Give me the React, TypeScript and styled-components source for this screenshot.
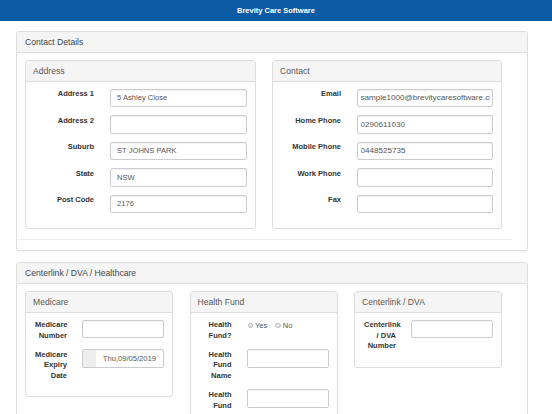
import React from 'react';
import styled, { createGlobalStyle } from 'styled-components';

const Global = createGlobalStyle`
  html, body { margin: 0; padding: 0; overflow: hidden; background: #fff; }
  body { font-family: "Liberation Sans", Arial, Helvetica, sans-serif; color: #333; }
  *, *::before, *::after { box-sizing: border-box; }
`;

const TopBar = styled.header`
  height: 21px;
  background: #0c5aa4;
  color: #fff;
  font-weight: bold;
  font-size: 7.5px;
  display: flex;
  align-items: center;
  justify-content: center;
`;

const Main = styled.main`
  padding: 10px 24px 0 16px;
  display: flex;
  flex-direction: column;
  gap: 11px;
`;

const Panel = styled.section`
  border: 1px solid #dddddd;
  border-radius: 3px;
  background: #fff;
  box-shadow: 0 1px 1px rgba(0, 0, 0, 0.04);
`;

const PanelHeading = styled.div`
  height: 21px;
  line-height: 20px;
  padding: 0 8px;
  background: #f5f5f5;
  border-bottom: 1px solid #dddddd;
  border-radius: 2px 2px 0 0;
  font-size: 8.6px;
  color: #444;
`;

const PanelBody = styled.div`
  padding: 7px 0 10px 8px;
`;

const Columns = styled.div<{ $cols: string; $gap: number }>`
  display: grid;
  grid-template-columns: ${(p) => p.$cols};
  column-gap: ${(p) => p.$gap}px;
  align-items: start;
`;

const Divider = styled.hr`
  border: 0;
  border-top: 1px solid #eeeeee;
  margin: 10px 15px 0 -8px;
  height: 0;
`;

const SubPanel = styled.div`
  border: 1px solid #dddddd;
  border-radius: 3px;
  background: #fff;
`;

const SubHeading = styled(PanelHeading)`
  padding: 0 7px;
  color: #555;
`;

const FormGrid = styled.div<{ $label: number; $gap: number }>`
  padding: 6.5px 8px 15px 9px;
  display: grid;
  grid-template-columns: ${(p) => p.$label}px 1fr;
  column-gap: ${(p) => p.$gap}px;
  row-gap: 8px;
  align-items: start;
`;

const Label = styled.label`
  font-size: 7.5px;
  font-weight: bold;
  line-height: 10.6px;
  text-align: right;
  padding-top: 0.5px;
  color: #333;
`;

const Field = styled.input<{ $pad: number; $size: number }>`
  display: block;
  width: 100%;
  height: 18.5px;
  margin: 0;
  border: 1px solid #cccccc;
  border-radius: 2px;
  padding: 0 ${(p) => p.$pad}px;
  font-family: inherit;
  font-size: ${(p) => p.$size}px;
  color: #555;
  background: #fff;
  box-shadow: inset 0 1px 1px rgba(0, 0, 0, 0.06);
  outline: none;
`;

const DateField = styled.div`
  display: flex;
  height: 18.5px;
  border: 1px solid #cccccc;
  border-radius: 2px;
  overflow: hidden;
  font-size: 7.6px;
  color: #555;
  box-shadow: inset 0 1px 1px rgba(0, 0, 0, 0.06);
`;

const DateAddon = styled.span`
  width: 13px;
  background: #eeeeee;
  flex: none;
`;

const DateText = styled.span`
  flex: 1;
  display: flex;
  align-items: center;
  justify-content: flex-end;
  padding-right: 7px;
`;

const RadioGroup = styled.div`
  display: flex;
  align-items: center;
  height: 10.6px;
  margin-top: 0.5px;
  font-size: 7.5px;
  color: #555;
  gap: 7px;
`;

const RadioOption = styled.span`
  display: inline-flex;
  align-items: center;
  gap: 2px;
`;

const RadioDot = styled.span`
  width: 5.5px;
  height: 5.5px;
  margin-left: 1px;
  border-radius: 50%;
  border: 1px solid #b8b8b8;
  background: #e8e8e8;
`;

type Row = { label: string; value?: string };

const FormRows: React.FC<{ rows: Row[]; pad: number; size: number }> = ({ rows, pad, size }) => (
  <>
    {rows.map((r) => (
      <React.Fragment key={r.label}>
        <Label>{r.label}</Label>
        <Field $pad={pad} $size={size} readOnly defaultValue={r.value ?? ''} />
      </React.Fragment>
    ))}
  </>
);

export default function App() {
  return (
    <>
      <Global />
      <TopBar>Brevity Care Software</TopBar>
      <Main>
        <Panel>
          <PanelHeading>Contact Details</PanelHeading>
          <PanelBody>
            <Columns $cols="231px 230px" $gap={16}>
              <SubPanel>
                <SubHeading>Address</SubHeading>
                <FormGrid $label={59} $gap={16}>
                  <FormRows
                    pad={6}
                    size={7.6}
                    rows={[
                      { label: 'Address 1', value: '5 Ashley Close' },
                      { label: 'Address 2' },
                      { label: 'Suburb', value: 'ST JOHNS PARK' },
                      { label: 'State', value: 'NSW' },
                      { label: 'Post Code', value: '2176' },
                    ]}
                  />
                </FormGrid>
              </SubPanel>
              <SubPanel>
                <SubHeading>Contact</SubHeading>
                <FormGrid $label={59} $gap={16}>
                  <FormRows
                    pad={2.5}
                    size={8.1}
                    rows={[
                      { label: 'Email', value: 'sample1000@brevitycaresoftware.com' },
                      { label: 'Home Phone', value: '0290611030' },
                      { label: 'Mobile Phone', value: '0448525735' },
                      { label: 'Work Phone' },
                      { label: 'Fax' },
                    ]}
                  />
                </FormGrid>
              </SubPanel>
            </Columns>
            <Divider />
          </PanelBody>
        </Panel>

        <Panel>
          <PanelHeading>Centerlink / DVA / Healthcare</PanelHeading>
          <PanelBody>
            <Columns $cols="148px 148px 148px" $gap={16.5}>
              <SubPanel>
                <SubHeading>Medicare</SubHeading>
                <FormGrid $label={32} $gap={15}>
                  <Label>Medicare Number</Label>
                  <Field $pad={6} $size={7.6} readOnly defaultValue="" />
                  <Label>Medicare Expiry Date</Label>
                  <DateField>
                    <DateAddon />
                    <DateText>Thu,09/05/2019</DateText>
                  </DateField>
                </FormGrid>
              </SubPanel>
              <SubPanel>
                <SubHeading>Health Fund</SubHeading>
                <FormGrid $label={32} $gap={15}>
                  <Label>Health Fund?</Label>
                  <RadioGroup>
                    <RadioOption>
                      <RadioDot />
                      Yes
                    </RadioOption>
                    <RadioOption>
                      <RadioDot />
                      No
                    </RadioOption>
                  </RadioGroup>
                  <Label>Health Fund Name</Label>
                  <Field $pad={6} $size={7.6} readOnly defaultValue="" />
                  <Label>Health Fund</Label>
                  <Field $pad={6} $size={7.6} readOnly defaultValue="" />
                </FormGrid>
              </SubPanel>
              <SubPanel>
                <SubHeading>Centerlink / DVA</SubHeading>
                <FormGrid $label={32} $gap={15}>
                  <Label>Centerlink / DVA Number</Label>
                  <Field $pad={6} $size={7.6} readOnly defaultValue="" />
                </FormGrid>
              </SubPanel>
            </Columns>
          </PanelBody>
        </Panel>
      </Main>
    </>
  );
}
